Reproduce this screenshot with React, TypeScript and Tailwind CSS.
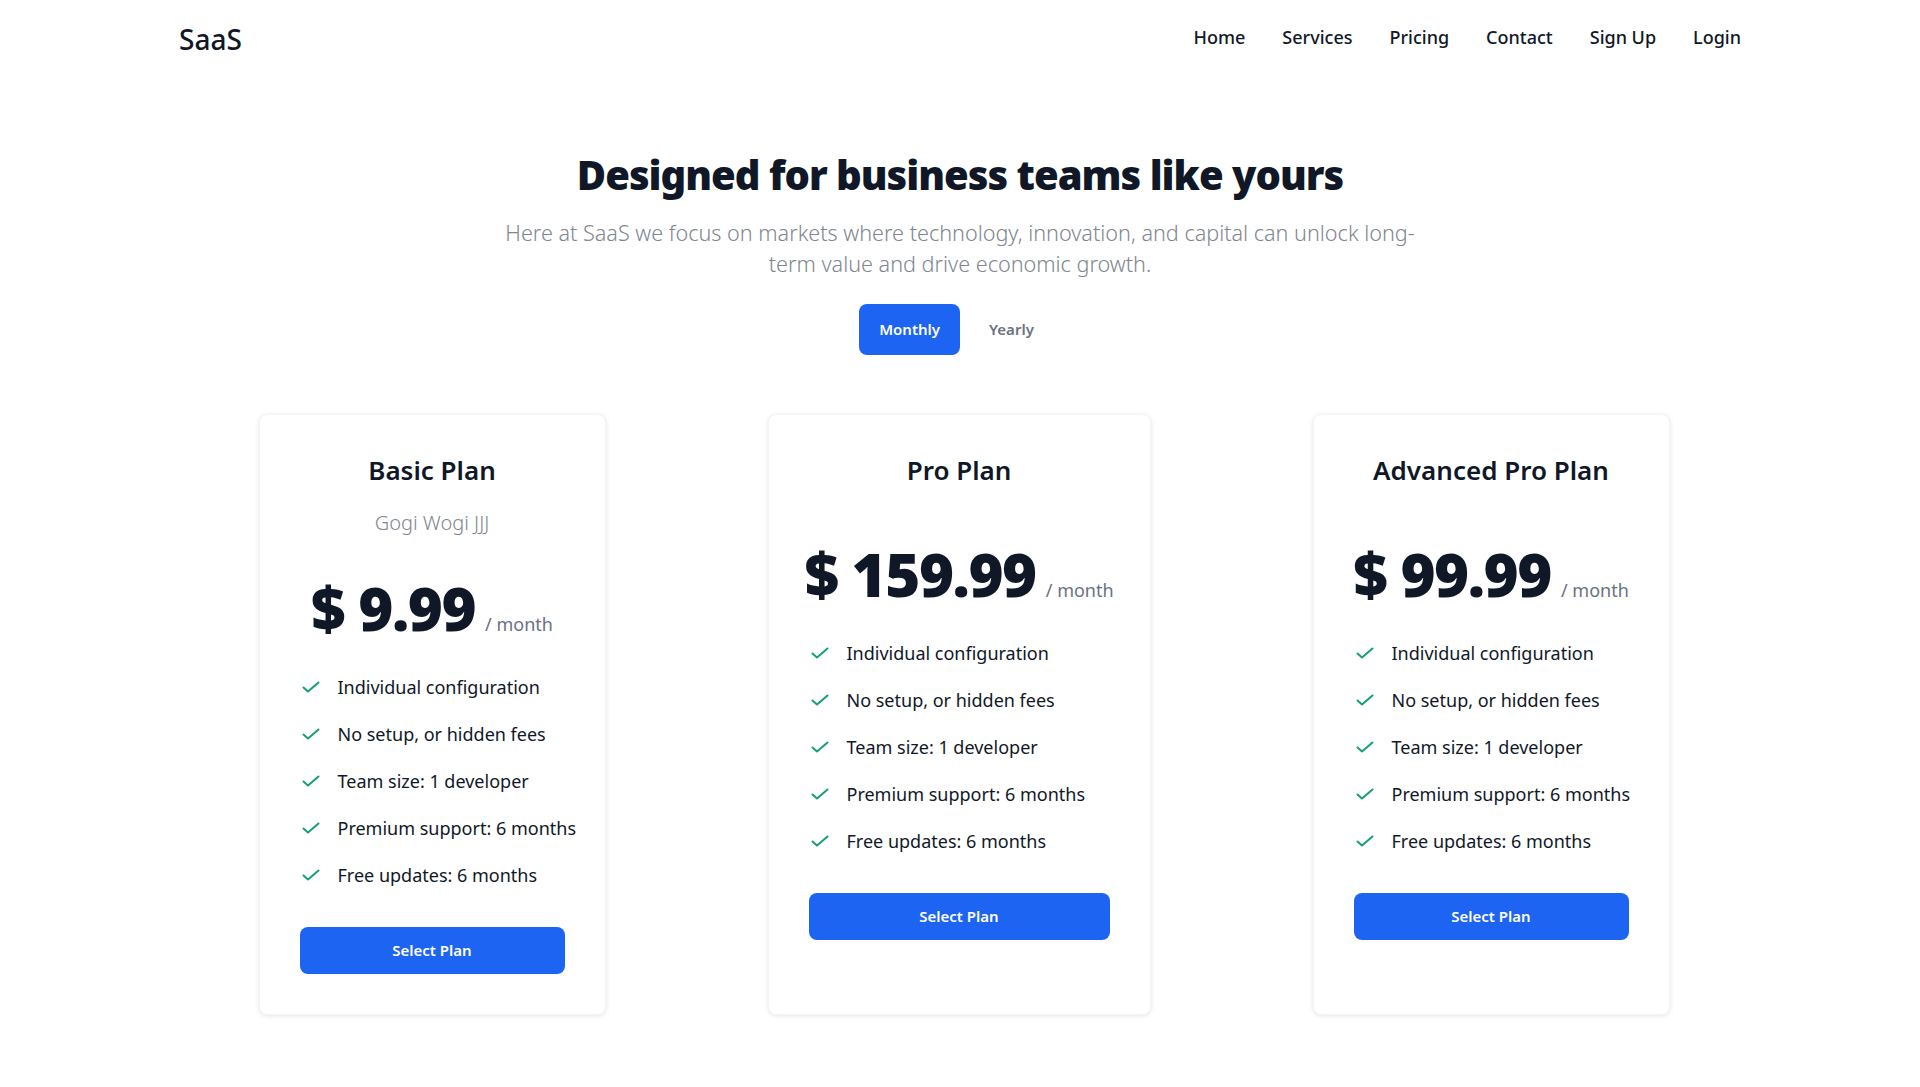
import React, { useState } from "react";

type Plan = {
  name: string;
  subtitle?: string;
  price: string;
  width: string;
};

const plans: Plan[] = [
  { name: "Basic Plan", subtitle: "Gogi Wogi JJJ", price: "$ 9.99", width: "w-[347px]" },
  { name: "Pro Plan", price: "$ 159.99", width: "w-[383px]" },
  { name: "Advanced Pro Plan", price: "$ 99.99", width: "w-[357px]" },
];

const features = [
  "Individual configuration",
  "No setup, or hidden fees",
  "Team size: 1 developer",
  "Premium support: 6 months",
  "Free updates: 6 months",
];

const navLinks = ["Home", "Services", "Pricing", "Contact", "Sign Up", "Login"];

function CheckIcon() {
  return (
    <svg
      width="20"
      height="20"
      viewBox="0 0 20 20"
      fill="none"
      className="shrink-0"
    >
      <path
        d="M2.5 10.5l4.5 4L17.5 5.5"
        stroke="#16a070"
        strokeWidth="2"
        strokeLinecap="round"
        strokeLinejoin="round"
      />
    </svg>
  );
}

function PlanCard({ plan }: { plan: Plan }) {
  return (
    <div
      className={`${plan.width} flex flex-col rounded-lg border border-gray-100 bg-white px-10 pt-[37px] pb-10 shadow-[0_1px_5px_rgba(0,0,0,0.1)]`}
    >
      <h3 className="text-center text-[26px] font-semibold leading-9 text-gray-900">
        {plan.name}
      </h3>
      {plan.subtitle ? (
        <p className="mt-[21px] text-center text-[20px] font-light leading-7 text-[#80868f]">
          {plan.subtitle}
        </p>
      ) : null}

      {/* Price */}
      <div
        className={`flex items-baseline justify-center whitespace-nowrap ${
          plan.subtitle ? "mt-[41px]" : "mt-[56px]"
        }`}
      >
        <span className="text-[60px] font-black leading-[60px] tracking-tight text-gray-900">
          {plan.price}
        </span>
        <span className="ml-2.5 text-lg text-gray-500">/ month</span>
      </div>

      <ul className="mt-[35px] flex flex-col gap-[19px]">
        {features.map((f) => (
          <li key={f} className="flex items-center gap-[17px] pl-[1px]">
            <CheckIcon />
            <span className="whitespace-nowrap text-[18px] leading-7 text-gray-900">
              {f}
            </span>
          </li>
        ))}
      </ul>

      <button className="mt-[38px] h-[47px] w-full rounded-lg bg-[#1d64f2] text-[15px] font-semibold text-white">
        Select Plan
      </button>
    </div>
  );
}

export default function App() {
  const [period, setPeriod] = useState<"monthly" | "yearly">("monthly");

  return (
    <div className="min-h-screen bg-white font-['Noto_Sans',sans-serif] text-gray-900">
      {/* Header */}
      <header className="flex h-[78px] items-center justify-between px-[179px]">
        <span className="text-[28px] font-medium text-gray-900">SaaS</span>
        <nav className="mb-[5px] flex items-center gap-[37px]">
          {navLinks.map((l) => (
            <a key={l} href="#" className="text-lg font-medium text-gray-900">
              {l}
            </a>
          ))}
        </nav>
      </header>

      {/* Hero */}
      <section className="flex flex-col items-center">
        <h1 className="mt-[73px] text-[40px] font-black leading-[48px] tracking-tight text-gray-900">
          Designed for business teams like yours
        </h1>
        <p className="mt-[18px] max-w-[930px] text-center text-[21.6px] font-light leading-[31px] text-[#80868f]">
          Here at SaaS we focus on markets where technology, innovation, and
          capital can unlock long-term value and drive economic growth.
        </p>

        <div className="mt-[25px] mr-[8px] flex items-center gap-2.5">
          <button
            onClick={() => setPeriod("monthly")}
            className={`h-[51px] rounded-lg px-[20px] text-[15px] font-semibold ${
              period === "monthly" ? "bg-[#1d64f2] text-white" : "text-gray-500"
            }`}
          >
            Monthly
          </button>
          <button
            onClick={() => setPeriod("yearly")}
            className={`h-[51px] rounded-lg px-[19px] text-[15px] font-semibold ${
              period === "yearly" ? "bg-[#1d64f2] text-white" : "text-gray-500"
            }`}
          >
            Yearly
          </button>
        </div>
      </section>

      {/* Plans */}
      <section className="mt-[59px] flex items-stretch justify-center gap-[162px] pb-16 pl-[8px]">
        {plans.map((p) => (
          <PlanCard key={p.name} plan={p} />
        ))}
      </section>
    </div>
  );
}
